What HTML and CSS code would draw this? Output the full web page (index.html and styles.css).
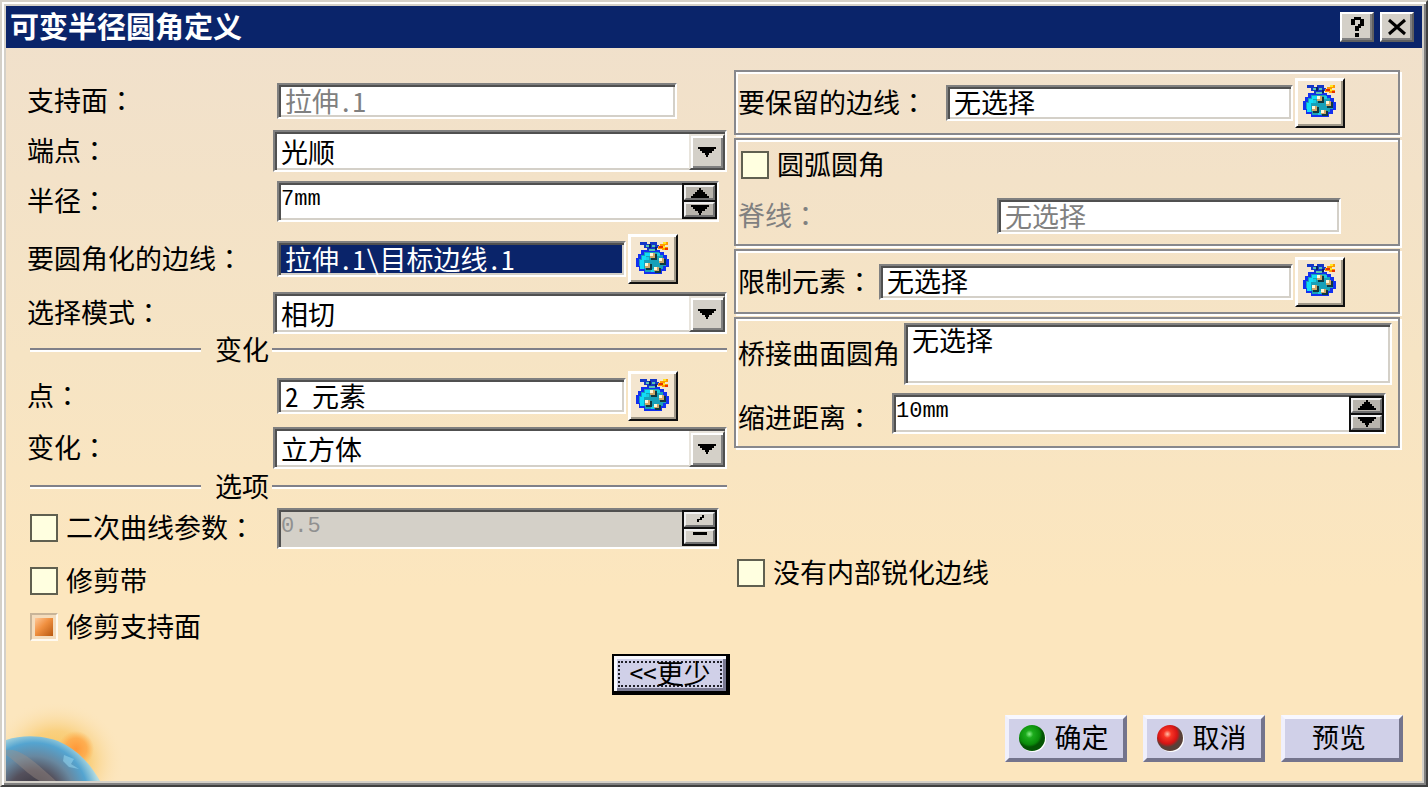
FILE: index.html
```html
<!DOCTYPE html>
<html lang="zh-CN">
<head>
<meta charset="utf-8">
<title>可变半径圆角定义</title>
<link rel="stylesheet" href="styles.css">
</head>
<body>
<svg class="defs" aria-hidden="true">
  <symbol id="bag" viewBox="0 0 34 34">
    <path d="M11 9h14v2h4v3h3v4h2v8h-3v4h-4v3H9v-3H4v-4H1v-9h2v-4h3v-4h5z" fill="#1230f0"/>
    <path d="M12 11h12v3h4v4h3v7h-3v3h-3v3H10v-3H6v-3H4v-7h2v-4h3v-3h3z" fill="#18a0b8"/>
    <path d="M10 12h5v3h-4v4H9v9H5v-9h2v-4h3z" fill="#10dcf8"/>
    <path d="M22 12h3v3h-3zM11 16h3v3h-3zM16 28h3v3h-3z" fill="#18cce0"/>
    <path d="M5 1h7v2h3V1h7v3h2v3h-2v3H12V7H9V4H5z" fill="#1436c8"/>
    <path d="M11 4h3v2h-3zM17 4h3v2h-3zM14 8h6v2h-6z" fill="#58c4b0"/>
    <path d="M14 3h2v4h-2zM20 6h2v3h-2z" fill="#082468"/>
    <path d="M25 3h3V1h5v3h-3v2h3v3h-6V8h-4V5h2z" fill="#ff9c00"/>
    <path d="M24 5h4v2h-4zM30 7h3v2h-3z" fill="#e83000"/>
    <path d="M28 1h3v2h-3zM28 5h2v2h-2z" fill="#ffe820"/>
    <g fill="#103840"><path d="M16 13h6v6h-6zM25 18h6v6h-6zM11 23h6v6h-6zM20 27h6v5h-6z"/></g>
    <g fill="#d0a868"><path d="M15 12h5v5h-5zM24 17h5v5h-5zM10 22h5v5h-5zM19 26h5v4h-5z"/></g>
    <g fill="#fff8d8"><path d="M15 12h3v3h-3zM24 17h3v3h-3zM10 22h3v3h-3zM19 26h3v3h-3z"/></g>
  </symbol>
  <symbol id="down" viewBox="0 0 18 10"><path d="M0 0h18v2h-2v2h-2v2h-3v2h-1v2H8V8H7V6H4V4H2V2H0z"/></symbol>
  <symbol id="up" viewBox="0 0 18 10"><path d="M8 0h2v2h2v2h2v2h2v2h2v2H0V8h2V6h2V4h2V2h2z"/></symbol>
</svg>

<form class="dialog">
  <header class="titlebar">
    <h1>可变半径圆角定义</h1>
    <button type="button" class="cap" aria-label="帮助">
      <svg viewBox="0 0 18 22" width="18" height="22"><path d="M3 3h3V1h7v2h3v7h-3v2h-2v3H7v-5h3V8h2V4H7v5H3zM7 17h4v4H7z"/></svg>
    </button>
    <button type="button" class="cap" aria-label="关闭">
      <svg viewBox="0 0 20 18" width="20" height="18"><path d="M2 2l16 14M18 2L2 16" stroke="#000" stroke-width="3"/></svg>
    </button>
  </header>

  <main class="content">
    <section class="left">
      <div class="row"><label for="support">支持面<span class="colon" lang="zh-TW">：</span></label>
        <div class="ctl inset short"><input id="support" class="field" value="拉伸.1" disabled></div></div>
      <div class="row"><label for="end">端点<span class="colon" lang="zh-TW">：</span></label>
        <div class="combo"><select id="end"><option>光顺</option></select><span class="arrow"><svg width="18" height="10"><use href="#down"/></svg></span></div></div>
      <div class="row"><label for="radius">半径<span class="colon" lang="zh-TW">：</span></label>
        <div class="ctl inset spin"><input id="radius" class="num" value="7mm"><span class="steps"><button type="button" aria-label="增大"><svg width="18" height="10"><use href="#up"/></svg></button><button type="button" aria-label="减小"><svg width="18" height="10"><use href="#down"/></svg></button></span></div></div>
      <div class="row"><label for="edges">要圆角化的边线<span class="colon" lang="zh-TW">：</span></label>
        <div class="ctl inset pick"><input id="edges" class="field active" value="拉伸.1\目标边线.1"><button type="button" class="bag" aria-label="元素列表"><svg width="34" height="34"><use href="#bag"/></svg></button></div></div>
      <div class="row"><label for="mode">选择模式<span class="colon" lang="zh-TW">：</span></label>
        <div class="combo"><select id="mode"><option>相切</option></select><span class="arrow"><svg width="18" height="10"><use href="#down"/></svg></span></div></div>
      <h2 class="divider">变化</h2>
      <div class="row"><label for="points">点<span class="colon" lang="zh-TW">：</span></label>
        <div class="ctl inset pick"><input id="points" class="field" value="2 元素"><button type="button" class="bag" aria-label="点列表"><svg width="34" height="34"><use href="#bag"/></svg></button></div></div>
      <div class="row"><label for="variation">变化<span class="colon" lang="zh-TW">：</span></label>
        <div class="combo"><select id="variation"><option>立方体</option></select><span class="arrow"><svg width="18" height="10"><use href="#down"/></svg></span></div></div>
      <h2 class="divider">选项</h2>
      <div class="row"><label class="check"><input type="checkbox">二次曲线参数<span class="colon" lang="zh-TW">：</span></label>
        <div class="ctl inset spin off"><input class="num" aria-label="二次曲线参数值" value="0.5" disabled><span class="steps"><button type="button" aria-label="增大" disabled><svg width="18" height="10" viewBox="0 0 18 10"><path d="M6 7h2V5h3V3h2V0h-2v2H9v2H6z"/></svg></button><button type="button" aria-label="减小" disabled><svg width="18" height="10" viewBox="0 0 18 10"><path d="M2 0h14v3H2z"/></svg></button></span></div></div>
      <div class="row"><label class="check"><input type="checkbox">修剪带</label></div>
      <div class="row"><label class="check"><input type="checkbox" checked>修剪支持面</label></div>
      <button type="button" class="less"><span>&lt;&lt;更少</span></button>
    </section>

    <section class="right">
      <div class="group single">
        <label for="keep">要保留的边线<span class="colon" lang="zh-TW">：</span></label>
        <div class="ctl pick keep"><input id="keep" class="field" value="无选择"><button type="button" class="bag" aria-label="边线列表"><svg width="34" height="34"><use href="#bag"/></svg></button></div>
      </div>
      <div class="group arc">
        <label class="check"><input type="checkbox">圆弧圆角</label>
        <div class="line"><label for="spine" class="dim">脊线<span class="colon" lang="zh-TW">：</span></label>
          <div class="ctl spine"><input id="spine" class="field" value="无选择" disabled></div></div>
      </div>
      <div class="group single">
        <label for="limit">限制元素<span class="colon" lang="zh-TW">：</span></label>
        <div class="ctl pick limit"><input id="limit" class="field" value="无选择"><button type="button" class="bag" aria-label="限制元素列表"><svg width="34" height="34"><use href="#bag"/></svg></button></div>
      </div>
      <div class="group blend">
        <div class="line"><label for="bridge">桥接曲面圆角</label><textarea id="bridge" class="field">无选择</textarea></div>
        <div class="line low"><label for="setback">缩进距离<span class="colon" lang="zh-TW">：</span></label>
          <div class="ctl spin setback"><input id="setback" class="num" value="10mm"><span class="steps"><button type="button" aria-label="增大"><svg width="18" height="10"><use href="#up"/></svg></button><button type="button" aria-label="减小"><svg width="18" height="10"><use href="#down"/></svg></button></span></div></div>
      </div>
      <label class="check sharp"><input type="checkbox">没有内部锐化边线</label>
    </section>
  </main>

  <footer class="footer">
    <svg class="planet" viewBox="0 0 120 84" width="120" height="84" aria-hidden="true">
      <defs>
        <radialGradient id="glow"><stop offset="0" stop-color="#f8c050"/><stop offset=".5" stop-color="#f9cc74" stop-opacity=".85"/><stop offset="1" stop-color="#fce6be" stop-opacity="0"/></radialGradient>
        <radialGradient id="sun"><stop offset="0" stop-color="#ff9838"/><stop offset=".6" stop-color="#ffa646" stop-opacity=".8"/><stop offset="1" stop-color="#ffb050" stop-opacity="0"/></radialGradient>
        <radialGradient id="globe" gradientUnits="userSpaceOnUse" cx="28" cy="100" r="66"><stop offset="0" stop-color="#302c34"/><stop offset=".4" stop-color="#54505c"/><stop offset=".62" stop-color="#6888a0"/><stop offset=".82" stop-color="#54a4d0"/><stop offset="1" stop-color="#b4dce0"/></radialGradient>
      </defs>
      <ellipse cx="50" cy="64" rx="68" ry="60" fill="url(#glow)"/>
      <circle cx="70" cy="52" r="18" fill="url(#sun)"/>
      <path d="M0 43C18 37 43 38 60 48C76 57 86 70 94 84H0z" fill="url(#globe)"/>
      <path d="M0 53C14 50 30 66 50 84H34C22 78 10 64 0 58z" fill="#a09088" opacity=".4"/>
      <path d="M58 58l10 4-3 5 8 5-10-2-6-6z" fill="#9cdcf4" opacity=".5"/>
    </svg>
    <button type="submit" class="action"><svg width="29" height="29" viewBox="0 0 29 29"><defs><radialGradient id="green" cx=".4" cy=".35"><stop offset="0" stop-color="#8cf08c"/><stop offset=".3" stop-color="#1cac1c"/><stop offset=".8" stop-color="#0a8c0a"/><stop offset="1" stop-color="#045404"/></radialGradient></defs><circle cx="15" cy="15" r="13" fill="#fff"/><circle cx="14" cy="14" r="13" fill="url(#green)"/></svg>确定</button>
    <button type="button" class="action"><svg width="29" height="29" viewBox="0 0 29 29"><defs><radialGradient id="red" cx=".4" cy=".35"><stop offset="0" stop-color="#ffc0a8"/><stop offset=".3" stop-color="#f83424"/><stop offset=".75" stop-color="#d41414"/><stop offset="1" stop-color="#584038"/></radialGradient></defs><circle cx="15" cy="15" r="13" fill="#fff"/><circle cx="14" cy="14" r="13" fill="url(#red)"/></svg>取消</button>
    <button type="button" class="action">预览</button>
  </footer>
</form>
</body>
</html>
```
FILE: styles.css
```css
* { box-sizing: border-box; }
body, h1, h2, button, input, select, textarea {
  margin: 0;
  font-family: "Noto Sans Mono CJK SC", "Noto Sans CJK SC", sans-serif;
}
body { font-size: 27px; line-height: 30px; color: #000; }
button { padding: 0; color: #000; }
svg { display: block; flex: none; }
.defs { position: absolute; width: 0; height: 0; }

.dialog {
  min-height: 100vh;
  display: flex;
  flex-direction: column;
  border: 2px solid;
  border-color: #d4d0c8 #404040 #404040 #d4d0c8;
  box-shadow: inset 2px 2px #fff, inset -2px -2px #808080, inset 4px 4px #d4d0c8, inset -4px -4px #d4d0c8;
  padding: 4px;
  background: linear-gradient(#f0e0cc, #f6e4c4 45%, #fce6be 75%) content-box;
}
.titlebar {
  display: flex;
  align-items: center;
  gap: 6px;
  height: 42px;
  padding: 0 8px 0 4px;
  background: #0a246a;
  color: #fff;
}
h1 { flex: 1; padding-bottom: 4px; font-size: 29px; font-weight: 700; line-height: 38px; }
.cap {
  width: 34px;
  height: 30px;
  display: grid;
  place-items: center;
  background: #d4d0c8;
  border: 2px solid;
  border-color: #fff #606060 #606060 #fff;
  box-shadow: inset -2px -2px #808080;
}

.content {
  flex: 1;
  display: grid;
  grid-template-columns: 703fr 666fr;
  gap: 4px;
  padding: 22px 22px 0 21px;
}
.left {
  display: grid;
  grid-template-rows: 50px 50px 50px 66px 40px 36px 56px 48px 28px 56px 50px 42px auto;
  align-content: start;
  padding-top: 6px;
}
.row {
  display: grid;
  grid-template-columns: 246px 1fr;
  align-items: center;
  padding-right: 3px;
}
.colon {
  display: inline-block;
  font-family: "Noto Sans CJK TC", sans-serif;
  text-spacing-trim: space-all;
}
label { padding-bottom: 2px; white-space: nowrap; }
.dim { color: #808080; }

.field, .spin {
  border: 2px solid;
  border-color: #808080 #fff #fff #808080;
  box-shadow: inset 2px 2px #505050, inset -2px -2px #d4d0c8;
  border-radius: 0;
  background: #fff;
}
.field {
  width: 100%;
  min-width: 0;
  height: 36px;
  padding: 0 6px 2px;
  font-size: 27px;
  color: #000;
}
.field:disabled { color: #808080; }
.field.active { background: #0a246a; color: #fff; }
.ctl { display: flex; align-items: center; }
.inset { margin-left: 4px; }
.short { margin-right: 50px; }
.pick { gap: 2px; }
.row .pick { margin-right: 49px; }
.spin { height: 41px; padding: 2px 0 2px 2px; }
.row .spin { margin-right: 8px; }
.num {
  flex: 1;
  min-width: 0;
  height: 32px;
  padding: 0 0 4px;
  border: 0;
  background: none;
  font-family: "Liberation Mono", monospace;
  font-size: 22px;
  color: #000;
}
.num:disabled { color: #909090; }
.off { background: #d4d0c8; }
.steps {
  width: 35px;
  height: 36px;
  padding: 2px;
  display: grid;
  gap: 2px;
  background: #101010;
}
.steps button {
  display: grid;
  place-items: center;
  background: #b8b4ac;
  border: 2px solid;
  border-color: #f0f0f0 #707070 #707070 #f0f0f0;
}
.steps button:disabled { background: #d4d0c8; }
.steps svg { margin: -1px 0; }

.combo {
  position: relative;
  height: 42px;
  border: 2px solid;
  border-color: #808080 #fff #fff #808080;
  box-shadow: inset 2px 2px #505050, inset -2px -2px #d4d0c8;
  background: #fff;
}
.combo select {
  display: block;
  appearance: none;
  width: 100%;
  height: 36px;
  padding: 0 40px 0 6px;
  border: 0;
  background: none;
  font-size: 27px;
  color: #000;
}
.arrow {
  position: absolute;
  top: 2px;
  right: 0;
  bottom: 0;
  width: 36px;
  display: grid;
  place-items: center;
  pointer-events: none;
  background: #d4d0c8;
  border: 2px solid;
  border-color: #e8e4dc #505050 #505050 #e8e4dc;
  box-shadow: inset 2px 2px #fff, inset -2px -2px #808080;
}
.bag {
  flex: none;
  width: 50px;
  height: 50px;
  padding: 0 3px 3px 0;
  display: grid;
  place-items: center;
  background: #f4e6d0;
  border: 2px solid;
  border-color: #fff #101010 #101010 #fff;
  box-shadow: inset 1px 1px #fff, inset -2px -2px #a09888;
}

.divider {
  display: grid;
  grid-template-columns: 171px auto 1fr;
  align-items: center;
  padding: 0 0 2px 3px;
  font-size: 27px;
  font-weight: 400;
  line-height: 28px;
  text-indent: 14px;
}
.divider::before, .divider::after {
  content: "";
  height: 2px;
  background: #808088;
  box-shadow: 0 2px #fff;
}
.divider::after { margin: 0 3px; }

.check { display: flex; align-items: center; padding-left: 3px; }
.check input {
  appearance: none;
  width: 28px;
  height: 28px;
  margin: 2px 8px 0 0;
  border: 2px solid #606050;
  background: #ffffe0;
}
.check input:checked {
  border-color: #c8b498 #fffaf0 #fffaf0 #c8b498;
  background: linear-gradient(135deg, #ffc898, #f09040 45%, #b85810) center / 18px 18px no-repeat #f4dcbc;
}
.less {
  justify-self: end;
  width: 118px;
  height: 41px;
  margin-top: 6px;
  padding: 0 4px;
  background: #d0d0e8;
  border: 2px solid #000;
  border-right-width: 4px;
  border-bottom-width: 4px;
  box-shadow: inset 3px 3px #f8f8ff, inset -3px -3px #787890;
}
.less span {
  display: block;
  height: 26px;
  border: 2px dotted #202028;
  font-size: 27px;
  line-height: 20px;
}

.right { display: flex; flex-direction: column; gap: 3px; }
.group {
  padding: 0 2px;
  border: 2px solid #88888c;
  box-shadow: 2px 2px #fff, inset 2px 2px #fff;
}
.single {
  display: flex;
  align-items: center;
  justify-content: space-between;
  height: 65px;
  padding-right: 53px;
}
.keep { flex: 0 0 399px; }
.limit { flex: 0 0 466px; }
.arc { height: 108px; padding-top: 9px; }
.line { display: flex; align-items: center; justify-content: space-between; gap: 4px; }
.arc .line { padding-right: 55px; margin-top: 17px; }
.spine { flex: 0 0 344px; }
.blend { height: 131px; padding-top: 4px; }
textarea.field {
  display: block;
  flex: 1;
  height: 62px;
  margin-right: 4px;
  line-height: 30px;
  resize: none;
  overflow: hidden;
}
.low { align-items: flex-end; }
.setback { flex: 0 0 494px; margin: 8px 10px 0 0; }
.sharp { margin-top: 106px; }

.footer { position: relative; display: flex; justify-content: flex-end; gap: 16px; padding: 0 19px 19px; }
.planet { position: absolute; left: 0; bottom: 0; }
.action {
  width: 122px;
  height: 47px;
  padding: 0 6px 4px 0;
  display: flex;
  align-items: center;
  justify-content: center;
  gap: 8px;
  font-size: 27px;
  background: #d0d0e8;
  border: 4px solid;
  border-color: #f8f8ff #74748c #74748c #f0f0fc;
}
.action svg { margin-top: 4px; }
```
